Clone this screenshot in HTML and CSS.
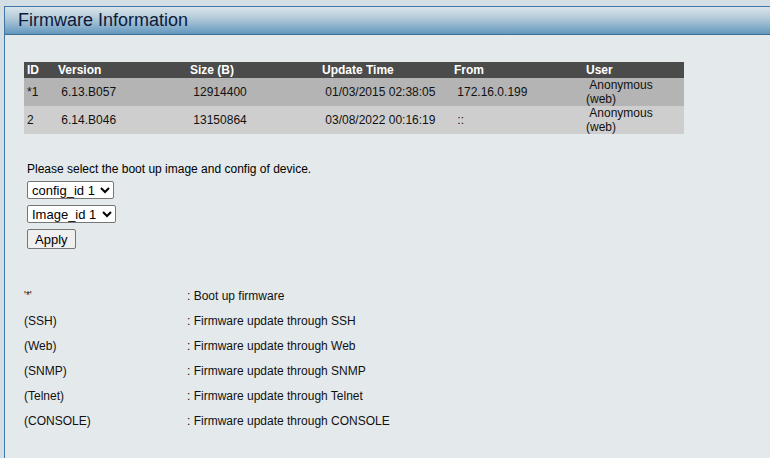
FILE: index.html
```html
<!DOCTYPE html>
<html>
	<head>
		<meta charset="utf-8">
		<title>Firmware Information</title>
		<link rel="stylesheet" href="styles.css">
	</head>
	<body>

	<div class="panel">
		<div class="title">Firmware Information</div>
		<div class="content">
			<table class="fw">
				<tr class="head">
					<th class="c-id">ID</th>
					<th class="c-mid">Version</th>
					<th class="c-mid">Size (B)</th>
					<th class="c-mid">Update Time</th>
					<th class="c-mid">From</th>
					<th class="c-user">User</th>
				</tr>
				<tr class="odd">
					<td>*1</td>
					<td>&nbsp;6.13.B057</td>
					<td>&nbsp;12914400</td>
					<td>&nbsp;01/03/2015 02:38:05</td>
					<td>&nbsp;172.16.0.199</td>
					<td>&nbsp;Anonymous<br>(web)</td>
				</tr>
				<tr class="even">
					<td>2</td>
					<td>&nbsp;6.14.B046</td>
					<td>&nbsp;13150864</td>
					<td>&nbsp;03/08/2022 00:16:19</td>
					<td>&nbsp;::</td>
					<td>&nbsp;Anonymous<br>(web)</td>
				</tr>
			</table>

			<div class="boot">
				<p>Please select the boot up image and config of device.</p>
				<select class="pick">
					<option>config_id 1</option>
					<option>config_id 2</option>
				</select>
				<select class="pick">
					<option>Image_id 1</option>
					<option>Image_id 2</option>
				</select>
				<button class="apply">Apply</button>
			</div>

			<table class="legend">
				<tr><td class="key"><span class="star">'*'</span></td><td>: Boot up firmware</td></tr>
				<tr><td class="key">(SSH)</td><td>: Firmware update through SSH</td></tr>
				<tr><td class="key">(Web)</td><td>: Firmware update through Web</td></tr>
				<tr><td class="key">(SNMP)</td><td>: Firmware update through SNMP</td></tr>
				<tr><td class="key">(Telnet)</td><td>: Firmware update through Telnet</td></tr>
				<tr><td class="key">(CONSOLE)</td><td>: Firmware update through CONSOLE</td></tr>
			</table>
		</div>
	</div>

	</body>
</html>
```

FILE: styles.css
```css
* {
	margin: 0;
	padding: 0;
}
html, body {
	height: 100%;
}
body {
	background: #d3dfe4;
	font-family: Arial, "Liberation Sans", sans-serif;
	font-size: 12px;
	color: #000;
	overflow: hidden;
	padding: 6px 0 0 4px;
	box-sizing: border-box;
}
.panel {
	background: #e4e9eb;
	border-left: 1px solid #3f78a6;
	border-top: 1px solid #3f78a6;
	height: 100%;
}
.title {
	height: 27px;
	line-height: 26px;
	padding-left: 13px;
	font-size: 18px;
	color: #0c1a3c;
	background: linear-gradient(to bottom, #d8e4ea 0%, #b5cbd9 40%, #78a5c6 85%, #6496bd 100%);
	border-bottom: 1px solid #3e6f98;
}
.content {
	padding: 27px 0 0 19px;
}
.fw {
	border-collapse: collapse;
	width: 660px;
	table-layout: fixed;
}
.fw th, .fw td {
	text-align: left;
	padding: 0 0 0 3px;
	white-space: nowrap;
}
.fw th {
	background: #4b4b4b;
	color: #fff;
	font-weight: bold;
	height: 16px;
	line-height: 16px;
}
.fw td {
	height: 28px;
	line-height: 14px;
	color: #111;
}
.c-id {
	width: 28px;
}
.c-mid {
	width: 129px;
}
.c-user {
	width: 98px;
}
.fw .odd td {
	background: #b4b4b4;
}
.fw .even td {
	background: #cecece;
}
.boot {
	padding: 28px 0 0 3px;
}
.boot p {
	line-height: 14px;
	margin-bottom: 5px;
}
.pick {
	display: block;
	font-family: Arial, "Liberation Sans", sans-serif;
	font-size: 13px;
	height: 18px;
	padding-right: 2px;
	margin-bottom: 6px;
	color: #000;
	background: #fff;
	border: 1px solid #767676;
	border-radius: 2px;
}
.apply {
	font-family: Arial, "Liberation Sans", sans-serif;
	font-size: 13px;
	height: 20px;
	padding: 0 7px;
	background: #efefef;
	border: 1px solid #767676;
	border-radius: 2px;
}
.legend {
	border-collapse: collapse;
	margin-top: 34px;
}
.legend td {
	height: 25px;
	line-height: 14px;
	padding: 0;
	color: #111;
}
.legend .key {
	width: 163px;
}
.star {
	font-size: 10px;
	vertical-align: top;
}
```
